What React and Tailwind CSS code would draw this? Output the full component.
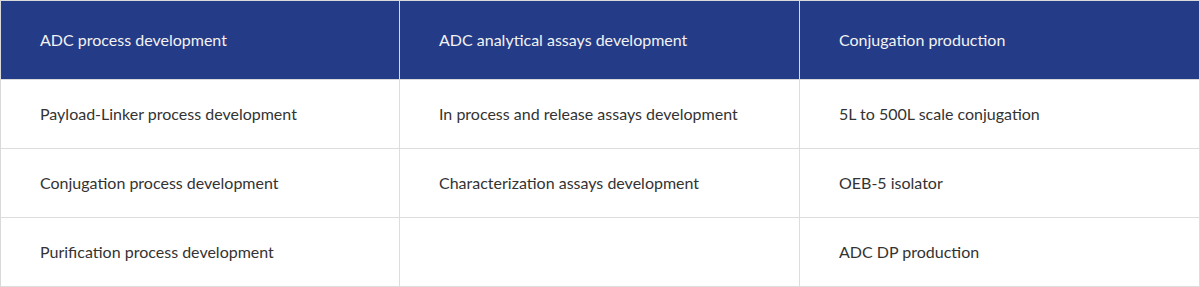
import React from 'react';

const HEADERS = ['ADC process development', 'ADC analytical assays development', 'Conjugation production'];

const ROWS = [
  ['Payload-Linker process development', 'In process and release assays development', '5L to 500L scale conjugation'],
  ['Conjugation process development', 'Characterization assays development', 'OEB-5 isolator'],
  ['Purification process development', '', 'ADC DP production'],
];

export default function App() {
  return (
    <div className="w-[1200px] bg-white" style={{ fontFamily: 'Lato, "Open Sans", sans-serif' }}>
      <div className="grid grid-cols-[399px_400px_400px] border-t border-l border-[#d9d9d9]">
        {HEADERS.map((h) => (
          <div
            key={h}
            className="h-[79px] flex items-center pl-[39px] bg-[#243b87] border-r border-b border-[#d9d9d9] text-[16px] text-[#f2f2f2]"
          >
            {h}
          </div>
        ))}
        {ROWS.map((row, i) =>
          row.map((cell, j) => (
            <div
              key={`${i}-${j}`}
              className="h-[69px] flex items-center pl-[39px] border-r border-b border-[#dddddd] text-[16px] text-[#333333]"
            >
              {cell}
            </div>
          ))
        )}
      </div>
    </div>
  );
}
